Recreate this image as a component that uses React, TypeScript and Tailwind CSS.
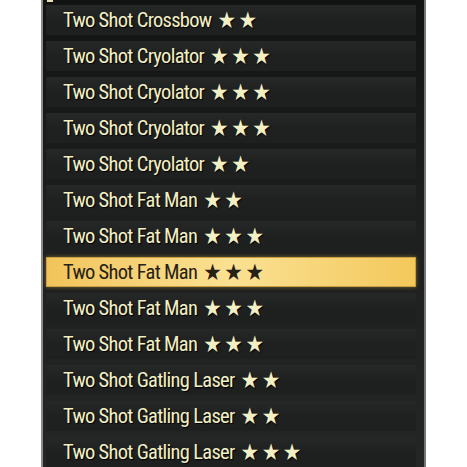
const rows: { name: string; stars: number }[] = [
  { name: 'Two Shot Crossbow', stars: 2 },
  { name: 'Two Shot Cryolator', stars: 3 },
  { name: 'Two Shot Cryolator', stars: 3 },
  { name: 'Two Shot Cryolator', stars: 3 },
  { name: 'Two Shot Cryolator', stars: 2 },
  { name: 'Two Shot Fat Man', stars: 2 },
  { name: 'Two Shot Fat Man', stars: 3 },
  { name: 'Two Shot Fat Man', stars: 3 },
  { name: 'Two Shot Fat Man', stars: 3 },
  { name: 'Two Shot Fat Man', stars: 3 },
  { name: 'Two Shot Gatling Laser', stars: 2 },
  { name: 'Two Shot Gatling Laser', stars: 2 },
  { name: 'Two Shot Gatling Laser', stars: 3 },
];

const SELECTED = 7;

export default function App() {
  return (
    <div className="w-[467px] h-[467px] bg-white overflow-hidden">
      <div className="ml-[41px] w-[385px] h-[467px] border-l-2 border-r-2 border-l-[#8a8a86] border-r-[#74766f] bg-gradient-to-b from-[#121413] via-[#1e201f] to-[#242625] pr-[8px] flex flex-col font-['Roboto_Condensed','Roboto','Liberation_Sans_Narrow',sans-serif] font-stretch-condensed">
        <div className="h-[5px] shrink-0 pl-[4px]">
          <div className="w-[6px] h-[2px] bg-[#e8e2b0]" />
        </div>
        <div className="flex flex-col gap-[6px] pl-[3px]">
          {rows.map((r, i) => {
            const sel = i === SELECTED;
            return (
              <div
                key={i}
                className={
                  sel
                    ? 'h-[30px] shrink-0 flex items-center pl-[16px] border border-[#c99d40] bg-gradient-to-r from-[#f1c45a] via-[#fbe192] to-[#f3c85b] shadow-[0_0_4px_rgba(240,200,90,0.45)] text-[#262117]'
                    : 'h-[30px] shrink-0 flex items-center pl-[17px] bg-gradient-to-b from-[#262827] via-[#1f2120] to-[#1e201f] text-[#f3efc5] [text-shadow:1px_1px_1px_#000]'
                }
              >
                <span className="text-[20.5px] leading-none font-[450] tracking-[-0.7px] whitespace-nowrap">{r.name}</span>
                <span className="ml-[6px] text-[23px] leading-none tracking-[-2px] whitespace-nowrap font-['DejaVu_Sans',sans-serif]">
                  {Array(r.stars).fill('★').join(' ')}
                </span>
              </div>
            );
          })}
        </div>
      </div>
    </div>
  );
}
